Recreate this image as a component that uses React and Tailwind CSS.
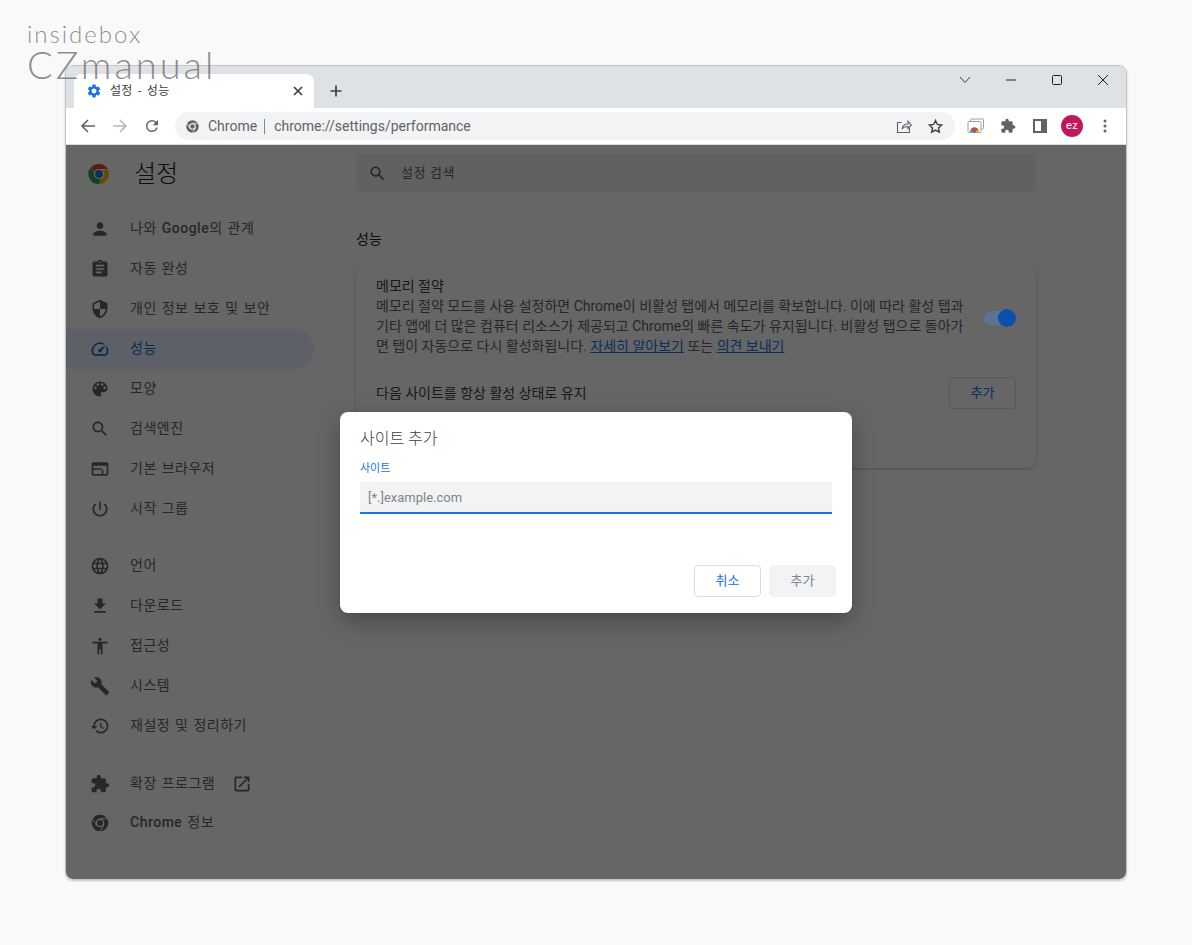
const sans = '"Roboto", "Noto Sans CJK KR", sans-serif'

const Icon = ({ d, className = 'w-5 h-5' }) => (
  <svg className={className} viewBox="0 0 24 24" fill="currentColor">
    <path d={d} />
  </svg>
)

const PATHS = {
  person: 'M12 12c2.21 0 4-1.79 4-4s-1.79-4-4-4-4 1.79-4 4 1.79 4 4 4zm0 2c-2.67 0-8 1.34-8 4v2h16v-2c0-2.66-5.33-4-8-4z',
  assignment: 'M19 3h-4.18C14.4 1.84 13.3 1 12 1c-1.3 0-2.4.84-2.82 2H5c-1.1 0-2 .9-2 2v14c0 1.1.9 2 2 2h14c1.1 0 2-.9 2-2V5c0-1.1-.9-2-2-2zm-7 0c.55 0 1 .45 1 1s-.45 1-1 1-1-.45-1-1 .45-1 1-1zm2 14H7v-2h7v2zm3-4H7v-2h10v2zm0-4H7V7h10v2z',
  shield: 'M12 1L3 5v6c0 5.55 3.84 10.74 9 12 5.16-1.26 9-6.45 9-12V5l-9-4zm0 10.99h7c-.53 4.12-3.28 7.79-7 8.94V12H5V6.3l7-3.11v8.8z',
  speed: 'M20.38 8.57l-1.23 1.85a8 8 0 0 1-.22 7.58H5.07A8 8 0 0 1 15.58 6.85l1.85-1.23A10 10 0 0 0 3.35 19a2 2 0 0 0 1.72 1h13.85a2 2 0 0 0 1.74-1 10 10 0 0 0-.27-10.44zm-9.79 6.84a2 2 0 0 0 2.83 0l5.66-8.49-8.49 5.66a2 2 0 0 0 0 2.83z',
  palette: 'M12 3c-4.97 0-9 4.03-9 9s4.03 9 9 9c.83 0 1.5-.67 1.5-1.5 0-.39-.15-.74-.39-1.01-.23-.26-.38-.61-.38-.99 0-.83.67-1.5 1.5-1.5H16c2.76 0 5-2.24 5-5 0-4.42-4.03-8-9-8zm-5.5 9c-.83 0-1.5-.67-1.5-1.5S5.67 9 6.5 9 8 9.67 8 10.5 7.33 12 6.5 12zm3-4C8.67 8 8 7.33 8 6.5S8.67 5 9.5 5s1.5.67 1.5 1.5S10.33 8 9.5 8zm5 0c-.83 0-1.5-.67-1.5-1.5S13.67 5 14.5 5s1.5.67 1.5 1.5S15.33 8 14.5 8zm3 4c-.83 0-1.5-.67-1.5-1.5S16.67 9 17.5 9s1.5.67 1.5 1.5-.67 1.5-1.5 1.5z',
  search: 'M15.5 14h-.79l-.28-.27C15.41 12.59 16 11.11 16 9.5 16 5.91 13.09 3 9.5 3S3 5.91 3 9.5 5.91 16 9.5 16c1.61 0 3.09-.59 4.23-1.57l.27.28v.79l5 4.99L20.49 19l-4.99-5zm-6 0C7.01 14 5 11.99 5 9.5S7.01 5 9.5 5 14 7.01 14 9.5 11.99 14 9.5 14z',
  browser: 'M20 4H4c-1.11 0-2 .9-2 2v12c0 1.1.89 2 2 2h16c1.1 0 2-.9 2-2V6c0-1.1-.89-2-2-2zm0 14h-4v-5h-2v5H4v-5h10v-2H4V8h16v10z',
  power: 'M13 3h-2v10h2V3zm4.83 2.17l-1.42 1.42C17.99 7.86 19 9.81 19 12c0 3.87-3.13 7-7 7s-7-3.13-7-7c0-2.19 1.01-4.14 2.58-5.42L6.17 5.17C4.23 6.82 3 9.26 3 12c0 4.97 4.03 9 9 9s9-4.03 9-9c0-2.74-1.23-5.18-3.17-6.83z',
  language: 'M11.99 2C6.47 2 2 6.48 2 12s4.47 10 9.99 10C17.52 22 22 17.52 22 12S17.52 2 11.99 2zm6.93 6h-2.95c-.32-1.25-.78-2.45-1.38-3.56 1.84.63 3.37 1.91 4.33 3.56zM12 4.04c.83 1.2 1.48 2.53 1.91 3.96h-3.82c.43-1.43 1.08-2.76 1.91-3.96zM4.26 14C4.1 13.36 4 12.69 4 12s.1-1.36.26-2h3.38c-.08.66-.14 1.32-.14 2 0 .68.06 1.34.14 2H4.26zm.82 2h2.95c.32 1.25.78 2.45 1.38 3.56-1.84-.63-3.37-1.9-4.33-3.56zm2.95-8H5.08c.96-1.66 2.49-2.93 4.33-3.56C8.81 5.55 8.35 6.75 8.03 8zM12 19.96c-.83-1.2-1.48-2.53-1.91-3.96h3.82c-.43 1.43-1.08 2.76-1.91 3.96zM14.34 14H9.66c-.09-.66-.16-1.32-.16-2 0-.68.07-1.35.16-2h4.68c.09.65.16 1.32.16 2 0 .68-.07 1.34-.16 2zm.25 5.56c.6-1.11 1.06-2.31 1.38-3.56h2.95c-.96 1.65-2.49 2.93-4.33 3.56zM16.36 14c.08-.66.14-1.32.14-2 0-.68-.06-1.34-.14-2h3.38c.16.64.26 1.31.26 2s-.1 1.36-.26 2h-3.38z',
  download: 'M19 9h-4V3H9v6H5l7 7 7-7zM5 18v2h14v-2H5z',
  accessibility: 'M12 2c1.1 0 2 .9 2 2s-.9 2-2 2-2-.9-2-2 .9-2 2-2zm9 7h-6v13h-2v-6h-2v6H9V9H3V7h18v2z',
  build: 'M22.7 19l-9.1-9.1c.9-2.3.4-5-1.5-6.9-2-2-5-2.4-7.4-1.3L9 6 6 9 1.6 4.7C.4 7.1.9 10.1 2.9 12.1c1.9 1.9 4.6 2.4 6.9 1.5l9.1 9.1c.4.4 1 .4 1.4 0l2.3-2.3c.5-.4.5-1.1.1-1.4z',
  restore: 'M13 3c-4.97 0-9 4.03-9 9H1l3.89 3.89.07.14L9 12H6c0-3.87 3.13-7 7-7s7 3.13 7 7-3.13 7-7 7c-1.93 0-3.68-.79-4.94-2.06l-1.42 1.42C8.27 19.99 10.51 21 13 21c4.97 0 9-4.03 9-9s-4.03-9-9-9zm-1 5v5l4.28 2.54.72-1.21-3.5-2.08V8H12z',
  extension: 'M20.5 11H19V7c0-1.1-.9-2-2-2h-4V3.5C13 2.12 11.88 1 10.5 1S8 2.12 8 3.5V5H4c-1.1 0-1.99.9-1.99 2v3.8H3.5c1.49 0 2.7 1.21 2.7 2.7s-1.21 2.7-2.7 2.7H2V20c0 1.1.9 2 2 2h3.8v-1.5c0-1.49 1.21-2.7 2.7-2.7 1.49 0 2.7 1.21 2.7 2.7V22H17c1.1 0 2-.9 2-2v-4h1.5c1.38 0 2.5-1.12 2.5-2.5S21.88 11 20.5 11z',
  openNew: 'M19 19H5V5h7V3H5c-1.11 0-2 .9-2 2v14c0 1.1.89 2 2 2h14c1.1 0 2-.9 2-2v-7h-2v7zM14 3v2h3.59l-9.83 9.83 1.41 1.41L19 6.41V10h2V3h-7z',
  gear: 'M19.14 12.94c.04-.3.06-.61.06-.94 0-.32-.02-.64-.07-.94l2.03-1.58c.18-.14.23-.41.12-.61l-1.92-3.32c-.12-.22-.37-.29-.59-.22l-2.39.96c-.5-.38-1.03-.7-1.62-.94l-.36-2.54c-.04-.24-.24-.41-.48-.41h-3.84c-.24 0-.43.17-.47.41l-.36 2.54c-.59.24-1.13.57-1.62.94l-2.39-.96c-.22-.08-.47 0-.59.22L2.74 8.87c-.12.21-.08.47.12.61l2.03 1.58c-.05.3-.09.63-.09.94s.02.64.07.94l-2.03 1.58c-.18.14-.23.41-.12.61l1.92 3.32c.12.22.37.29.59.22l2.39-.96c.5.38 1.03.7 1.62.94l.36 2.54c.05.24.24.41.48.41h3.84c.24 0 .44-.17.47-.41l.36-2.54c.59-.24 1.13-.56 1.62-.94l2.39.96c.22.08.47 0 .59-.22l1.92-3.32c.12-.22.07-.47-.12-.61l-2.01-1.58zM12 15.6c-1.98 0-3.6-1.62-3.6-3.6s1.62-3.6 3.6-3.6 3.6 1.62 3.6 3.6-1.62 3.6-3.6 3.6z',
}

const ChromeColor = ({ className }) => (
  <svg className={className} viewBox="0 0 48 48">
    <path fill="#ea4335" d="M24 2a22 22 0 0 1 19.05 11H24a11 11 0 0 0-10.3 7.2L6.2 9.6A22 22 0 0 1 24 2z" />
    <path fill="#fbbc04" d="M43.05 13A22 22 0 0 1 24 46l9.5-16.5A11 11 0 0 0 35 24a11 11 0 0 0-3.6-8.1z" />
    <path fill="#34a853" d="M24 46A22 22 0 0 1 6.2 9.6l9.5 16.5A11 11 0 0 0 24 35a11 11 0 0 0 5-1.2L24 46z" />
    <circle cx="24" cy="24" r="11" fill="#fff" />
    <circle cx="24" cy="24" r="8.5" fill="#1a73e8" />
  </svg>
)

const ChromeMono = ({ className, color = 'currentColor' }) => (
  <svg className={className} viewBox="0 0 24 24" fill="none">
    <circle cx="12" cy="12" r="10" fill={color} />
    <circle cx="12" cy="12" r="5.2" fill="#fff" />
    <circle cx="12" cy="12" r="3.6" fill={color} />
    <path d="M12 6.8h9M7.5 14.6L3 6.8M16.5 14.6L12 22" stroke="#fff" strokeWidth="1.1" />
  </svg>
)

const menuTop = [
  { label: <>나와 <span className="font-medium">Google</span>의 관계</>, icon: 'person' },
  { label: '자동 완성', icon: 'assignment' },
  { label: '개인 정보 보호 및 보안', icon: 'shield' },
  { label: '성능', icon: 'speed', active: true },
  { label: '모양', icon: 'palette' },
  { label: '검색엔진', icon: 'search' },
  { label: '기본 브라우저', icon: 'browser' },
  { label: '시작 그룹', icon: 'power' },
]

const menuAdvanced = [
  { label: '언어', icon: 'language' },
  { label: '다운로드', icon: 'download' },
  { label: '접근성', icon: 'accessibility' },
  { label: '시스템', icon: 'build' },
  { label: '재설정 및 정리하기', icon: 'restore' },
]

const labelClass = 'ml-[20px] -translate-y-px tracking-[0.5px] [word-spacing:1px]'

const MenuItem = ({ label, icon, active }) => (
  <div className={`flex items-center h-10 w-[248px] rounded-r-full pl-[24px] text-[14px] ${active ? 'bg-[#e8f0fe] text-[#1967d2]' : 'text-[#5f6368]'}`}>
    <Icon d={PATHS[icon]} className="w-5 h-5 shrink-0" />
    <span className={labelClass}>{label}</span>
  </div>
)

const Tab = () => (
  <div className="flex items-center w-[240px] h-[34px] ml-2 bg-white rounded-t-lg pl-[12px] pr-[9px]">
    <Icon d={PATHS.gear} className="w-[16px] h-[16px] text-[#1a73e8]" />
    <span className="ml-[8px] text-[12px] text-[#3c4043] tracking-[0.3px] [word-spacing:2px]">설정 - 성능</span>
    <svg className="ml-auto w-[14px] h-[14px] text-[#3c4043]" viewBox="0 0 14 14" stroke="currentColor" strokeWidth="1.7">
      <path d="M3 3l8 8M11 3l-8 8" />
    </svg>
  </div>
)

const TitleBar = () => (
  <div className="flex items-end h-[42px] bg-[#dee1e6] relative">
    <Tab />
    <svg className="w-[14px] h-[14px] ml-[15px] mb-[10px] text-[#3c4043]" viewBox="0 0 14 14" stroke="currentColor" strokeWidth="1.7">
      <path d="M7 1.5v11M1.5 7h11" />
    </svg>
    <div className="ml-auto flex self-start items-center h-[28px] text-[#3c4043]">
      <svg className="w-[14px] h-[14px]" viewBox="0 0 14 14" fill="none" stroke="currentColor">
        <path d="M2 4l5 5.5L12 4" />
      </svg>
      <svg className="w-[12px] h-[12px] ml-[33px]" viewBox="0 0 12 12" stroke="#222" strokeWidth="1">
        <path d="M1 6h10" />
      </svg>
      <svg className="w-[12px] h-[12px] ml-[34px]" viewBox="0 0 12 12" fill="none" stroke="#222">
        <rect x="1.5" y="1.5" width="9" height="9" rx="1" />
      </svg>
      <svg className="w-[12px] h-[12px] ml-[34px] mr-[17px]" viewBox="0 0 12 12" stroke="#222">
        <path d="M1 1l10 10M11 1L1 11" />
      </svg>
    </div>
  </div>
)

const Toolbar = () => (
  <div className="flex items-center h-[36px] bg-white border-b border-[#dadce0] box-content text-[#5f6368]">
    <svg className="w-[16px] h-[16px] ml-[14px]" viewBox="0 0 16 16" fill="none" stroke="#5f6368" strokeWidth="1.6">
      <path d="M15 8H2M8 2L2 8l6 6" />
    </svg>
    <svg className="w-[16px] h-[16px] ml-[16px]" viewBox="0 0 16 16" fill="none" stroke="#b4b7bb" strokeWidth="1.6">
      <path d="M1 8h13M8 2l6 6-6 6" />
    </svg>
    <svg className="w-[18px] h-[18px] ml-[15px]" viewBox="0 0 24 24" fill="#5f6368">
      <path d="M17.65 6.35A7.96 7.96 0 0 0 12 4a8 8 0 1 0 7.73 10h-2.08A6 6 0 1 1 12 6c1.66 0 3.14.69 4.22 1.78L13 11h7V4l-2.35 2.35z" />
    </svg>
    <div className="flex items-center w-[780px] h-[28px] ml-[14px] bg-[#f1f3f4] rounded-full">
      <ChromeMono className="w-[15px] h-[15px] ml-[10px]" color="#5f6368" />
      <span className="ml-[8px] pt-px text-[14px] text-[#5f6368]">Chrome</span>
      <span className="w-px h-[15px] ml-[7px] bg-[#80868b]" />
      <span className="ml-[9px] pt-px text-[14px] text-[#5f6368]">chrome://settings/performance</span>
      <svg className="w-[16px] h-[16px] ml-auto" viewBox="0 0 16 16" fill="none" stroke="#5f6368" strokeWidth="1.1">
        <path d="M13.5 10v4.5h-12v-10h4M6 11c.5-3 2.5-5 6-5V3.2l3.3 3.8L12 10.500V8.500c-2.500 0-4.500.5-6 2.500z" />
      </svg>
      <svg className="w-[17px] h-[17px] ml-[15px] mr-[11px]" viewBox="0 0 24 24" fill="none" stroke="#3c4043" strokeWidth="2">
        <path d="M12 3.500l2.600 5.600 6.100.7-4.500 4.200 1.200 6-5.400-3-5.400 3 1.200-6-4.500-4.200 6.100-.7z" />
      </svg>
    </div>
    <svg className="w-[17px] h-[16px] ml-[12px]" viewBox="0 0 17 16" fill="none">
      <rect x="3.500" y="1" width="13" height="10" rx="1" stroke="#9aa0a6" />
      <rect x="1" y="3.500" width="13" height="11" rx="1" fill="#fff" stroke="#9aa0a6" />
      <path d="M3 14a4.500 4.500 0 0 1 9 0z" fill="#34a853" />
      <path d="M7.500 9.500a4.500 4.500 0 0 1 4.500 4.500H9z" fill="#fbbc04" />
      <path d="M3.600 11.800a4.500 4.500 0 0 1 7.800 0L9 13H6z" fill="#ea4335" />
      <circle cx="7.500" cy="13.500" r="1.300" fill="#1a73e8" />
    </svg>
    <Icon d={PATHS.extension} className="w-[16px] h-[16px] ml-[16px] text-[#5f6368]" />
    <svg className="w-[14px] h-[14px] ml-[17px]" viewBox="0 0 14 14">
      <path fill="#5f6368" d="M0 0h14v14H0z" />
      <path fill="#fff" d="M2 2h6v10H2z" />
    </svg>
    <div className="flex items-center justify-center w-[22px] h-[22px] ml-[14px] rounded-full bg-[#c2185b] text-white text-[11px] tracking-[0.3px]">ez</div>
    <svg className="w-[4px] h-[14px] ml-[20px]" viewBox="0 0 4 14" fill="#5f6368">
      <circle cx="2" cy="2" r="1.500" />
      <circle cx="2" cy="7" r="1.500" />
      <circle cx="2" cy="12" r="1.500" />
    </svg>
  </div>
)

const Sidebar = () => (
  <aside className="w-[290px] shrink-0">
    <div className="flex items-center h-[58px] pl-[22px]">
      <ChromeColor className="w-[22px] h-[22px]" />
      <span className="ml-[24px] text-[24px] font-light text-[#202124]">설정</span>
    </div>
    <nav className="mt-[6px]">
      {menuTop.map((item) => <MenuItem key={item.icon} {...item} />)}
      <div className="h-[17px]" />
      {menuAdvanced.map((item) => <MenuItem key={item.icon} {...item} />)}
      <div className="h-[18px]" />
      <div className="flex items-center h-10 pl-[24px] text-[14px] text-[#5f6368]">
        <Icon d={PATHS.extension} className="w-5 h-5" />
        <span className={labelClass}>확장 프로그램</span>
        <Icon d={PATHS.openNew} className="w-[20px] h-[20px] ml-[17px]" />
      </div>
      <div className="flex items-center h-10 pl-[24px] text-[14px] text-[#5f6368] -mt-px">
        <ChromeMono className="w-5 h-5" />
        <span className={labelClass}><span className="font-medium">Chrome</span> 정보</span>
      </div>
    </nav>
  </aside>
)

const Main = () => (
  <main className="flex-1 pr-[90px]">
    <div className="flex items-center h-[38px] mt-[9px] rounded-lg bg-[#f1f3f4] text-[#5f6368] pl-[12px]">
      <Icon d={PATHS.search} className="w-[19px] h-[19px]" />
      <span className="ml-[14px] text-[13px] tracking-[0.6px]">설정 검색</span>
    </div>
    <h2 className="mt-[37px] text-[14px] leading-5 text-[#202124]">성능</h2>
    <section className="mt-[17px] h-[202px] bg-white rounded-lg shadow-[0_1px_3px_rgba(60,64,67,0.3)] px-[20px] pt-[10px] text-[14px] leading-[20px] text-[#5f6368]">
      <div className="flex items-start">
        <div className="whitespace-nowrap">
          <div className="text-[#3c4043]">메모리 절약</div>
          메모리 절약 모드를 사용 설정하면 Chrome이 비활성 탭에서 메모리를 확보합니다. 이에 따라 활성 탭과<br />
          기타 앱에 더 많은 컴퓨터 리소스가 제공되고 Chrome의 빠른 속도가 유지됩니다. 비활성 탭으로 돌아가<br />
          면 탭이 자동으로 다시 활성화됩니다. <a className="text-[#1a73e8] underline">자세히 알아보기</a> 또는 <a className="text-[#1a73e8] underline">의견 보내기</a>
        </div>
        {/* toggle stays bright in the reference, so it sits above the scrim */}
        <div className="relative z-10 ml-auto mt-[35px] w-[32px] h-[14px] rounded-full bg-[#5b7394]">
          <span className="absolute right-0 -top-[2px] w-[18px] h-[18px] rounded-full bg-[#0b50ab]" />
        </div>
      </div>
      <div className="flex items-center justify-between mt-[21px]">
        <span className="text-[#3c4043]">다음 사이트를 항상 활성 상태로 유지</span>
        <button className="w-[67px] h-[32px] border border-[#dadce0] rounded text-[13px] text-[#1a73e8]">추가</button>
      </div>
    </section>
  </main>
)

const Dialog = () => (
  <div className="absolute left-[274px] top-[267px] w-[512px] h-[201px] bg-white rounded-lg shadow-[0_8px_24px_rgba(0,0,0,0.3)] pl-[20px] pr-[16px] pt-[17px]">
    <h3 className="text-[16px] leading-5 font-light text-[#3c4043]">사이트 추가</h3>
    <label className="block mt-[14px] text-[11px] leading-3 text-[#1a73e8]">사이트</label>
    <div className="flex items-center w-[472px] h-[32px] mt-[7px] bg-[#f1f3f4] border-b-2 border-[#1a73e8] rounded-t-[2px] pl-[8px] pt-px text-[13px] text-[#80868b]">[*.]example.com</div>
    <div className="flex justify-end gap-[8px] mt-[51px]">
      <button className="w-[67px] h-[32px] bg-white border border-[#dadce0] rounded text-[13px] text-[#1a73e8]">취소</button>
      <button className="w-[67px] h-[32px] bg-[#f1f3f4] rounded text-[13px] text-[#80868b]">추가</button>
    </div>
  </div>
)

export default function App() {
  return (
    <div className="relative h-[945px] bg-[#f9f9f9] pt-[65px] pl-[65px] overflow-hidden" style={{ fontFamily: sans }}>
      <div className="relative flex flex-col w-[1062px] h-[815px] rounded-lg overflow-hidden border border-[#c4c4c4] shadow-[0_1px_2px_rgba(0,0,0,0.2)]">
        <TitleBar />
        <Toolbar />
        <div className="relative flex-1 bg-white">
          <div className="flex">
            <Sidebar />
            <Main />
          </div>
          <div className="absolute inset-0 bg-[rgba(0,0,0,0.6)]" />
          <Dialog />
        </div>
      </div>
      {/* watermark sits over the window */}
      <div className="absolute left-[27px] top-[20px] text-[#707070]/80 font-light" style={{ fontFamily: '"Lato", sans-serif' }}>
        <div className="text-[24px] leading-[28px] tracking-[2px]">insidebox</div>
        <div className="text-[38px] leading-[32px] tracking-[3px]">CZmanual</div>
      </div>
    </div>
  )
}
